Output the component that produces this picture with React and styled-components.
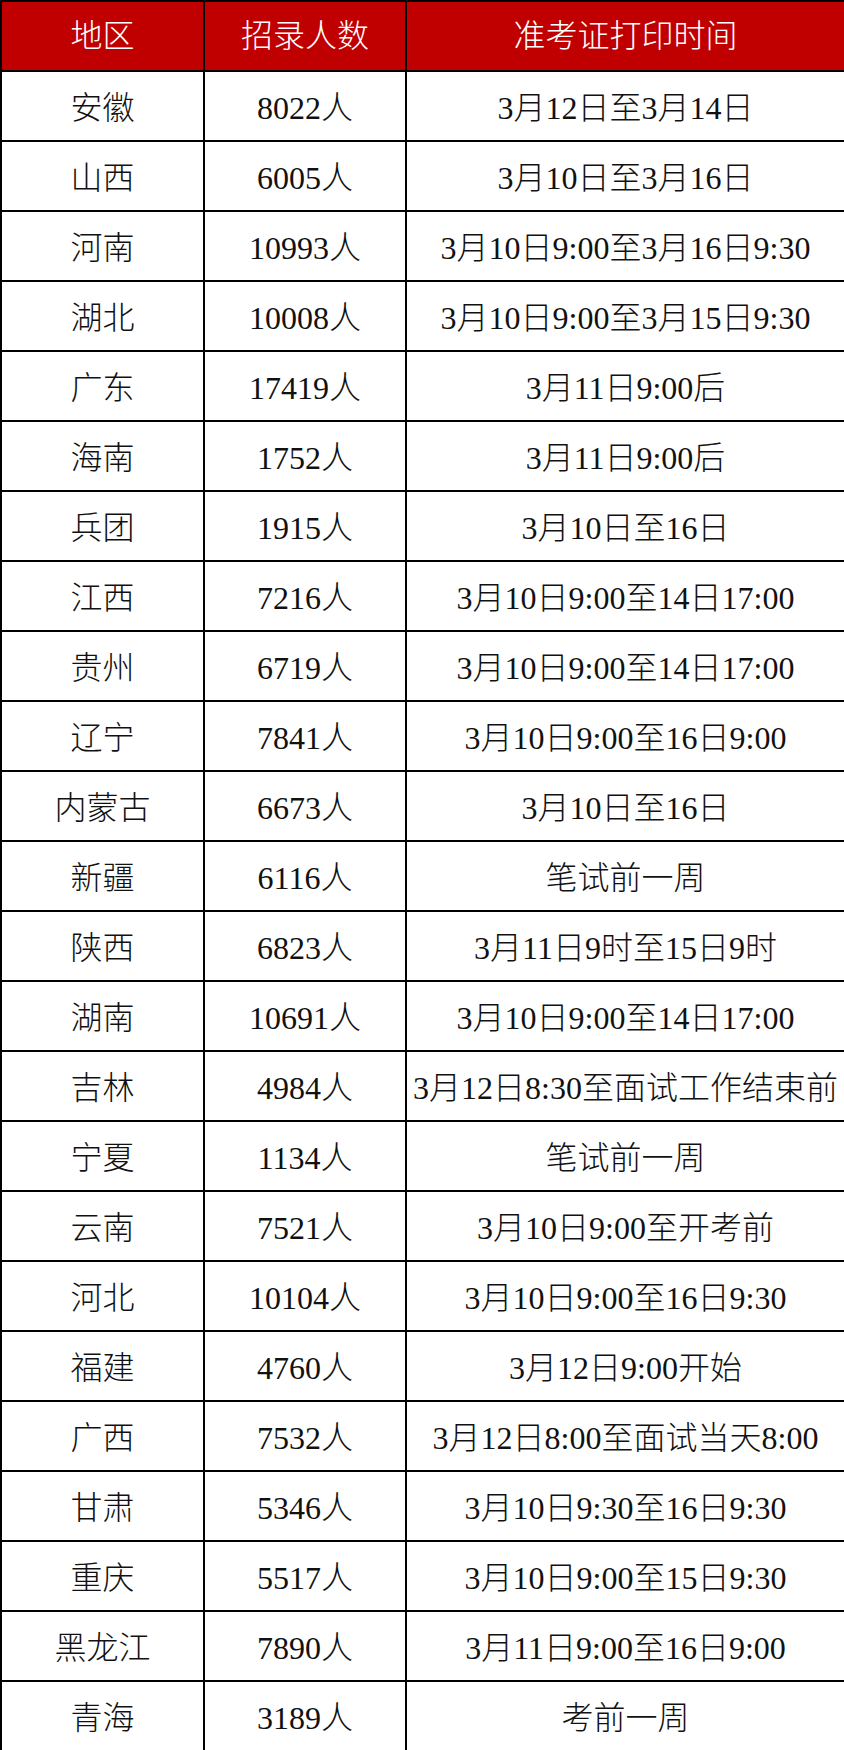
import React from "react";
import styled, { createGlobalStyle } from "styled-components";

const Global = createGlobalStyle`
  html, body { margin: 0; padding: 0; background: #fff; }
  body { font-family: "Liberation Serif", "Noto Sans CJK SC", serif; }
`;

const Table = styled.table`
  width: 844px;
  table-layout: fixed;
  border-collapse: collapse;
  font-family: "Liberation Serif", "Noto Sans CJK SC", serif;
`;

const Col = styled.col`
  width: ${(p) => p.$w}px;
`;

const HeadCell = styled.th`
  height: 68px;
  padding: 0;
  background: #c00000;
  color: #fff;
  font-size: 32px;
  line-height: 1;
  font-weight: 300;
  text-align: center;
  vertical-align: middle;
  border: 2px solid #000;
  white-space: nowrap;
`;

const Cell = styled.td`
  height: 65px;
  padding: 3px 0 0;
  color: #111;
  font-size: 32px;
  line-height: 1;
  font-weight: 300;
  text-align: center;
  vertical-align: middle;
  border: 2px solid #000;
  white-space: nowrap;
`;

const rows = [
  ["安徽", "8022人", "3月12日至3月14日"],
  ["山西", "6005人", "3月10日至3月16日"],
  ["河南", "10993人", "3月10日9:00至3月16日9:30"],
  ["湖北", "10008人", "3月10日9:00至3月15日9:30"],
  ["广东", "17419人", "3月11日9:00后"],
  ["海南", "1752人", "3月11日9:00后"],
  ["兵团", "1915人", "3月10日至16日"],
  ["江西", "7216人", "3月10日9:00至14日17:00"],
  ["贵州", "6719人", "3月10日9:00至14日17:00"],
  ["辽宁", "7841人", "3月10日9:00至16日9:00"],
  ["内蒙古", "6673人", "3月10日至16日"],
  ["新疆", "6116人", "笔试前一周"],
  ["陕西", "6823人", "3月11日9时至15日9时"],
  ["湖南", "10691人", "3月10日9:00至14日17:00"],
  ["吉林", "4984人", "3月12日8:30至面试工作结束前"],
  ["宁夏", "1134人", "笔试前一周"],
  ["云南", "7521人", "3月10日9:00至开考前"],
  ["河北", "10104人", "3月10日9:00至16日9:30"],
  ["福建", "4760人", "3月12日9:00开始"],
  ["广西", "7532人", "3月12日8:00至面试当天8:00"],
  ["甘肃", "5346人", "3月10日9:30至16日9:30"],
  ["重庆", "5517人", "3月10日9:00至15日9:30"],
  ["黑龙江", "7890人", "3月11日9:00至16日9:00"],
  ["青海", "3189人", "考前一周"],
];

export default function App() {
  return (
    <>
      <Global />
      <Table>
        <colgroup>
          <Col $w={203} />
          <Col $w={202} />
          <Col $w={439} />
        </colgroup>
        <thead>
          <tr>
            <HeadCell>地区</HeadCell>
            <HeadCell>招录人数</HeadCell>
            <HeadCell>准考证打印时间</HeadCell>
          </tr>
        </thead>
        <tbody>
          {rows.map(([a, b, c]) => (
            <tr key={a}>
              <Cell>{a}</Cell>
              <Cell>{b}</Cell>
              <Cell>{c}</Cell>
            </tr>
          ))}
        </tbody>
      </Table>
    </>
  );
}
